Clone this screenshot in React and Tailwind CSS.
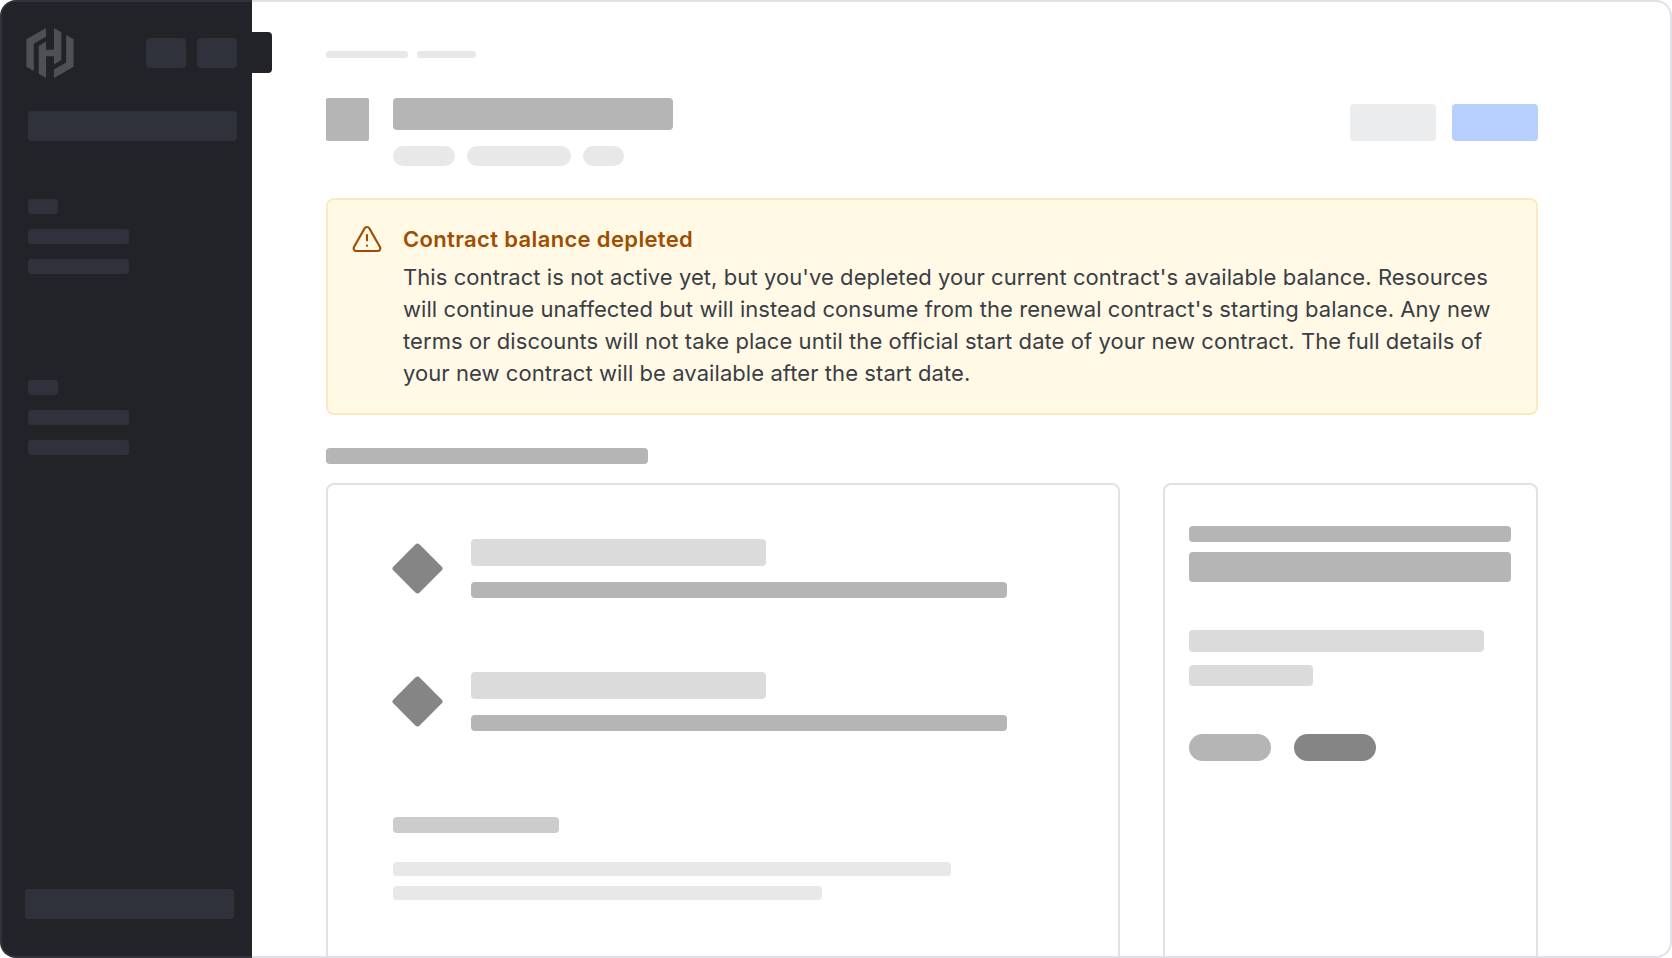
import React from "react";
import { SiHashicorp } from "react-icons/si";
import { TriangleAlert } from "lucide-react";

function Row() {
  return (
    <div className="flex items-center gap-[28px]">
      <div className="-ml-[2px] flex h-[52px] w-[52px] items-center justify-center">
        <div className="h-[37px] w-[37px] rotate-45 rounded-[3px] bg-[#858585]" />
      </div>
      <div className="flex flex-col gap-[16px]">
        <div className="h-[27px] w-[295px] rounded-[4px] bg-[#dbdbdb]" />
        <div className="h-[16px] w-[536px] rounded-[4px] bg-[#b5b5b5]" />
      </div>
    </div>
  );
}

function NavGroup() {
  return (
    <div className="flex flex-col gap-[15px]">
      <div className="h-[15px] w-[30px] rounded-[3px] bg-[#2f323a]" />
      <div className="h-[15px] w-[101px] rounded-[3px] bg-[#2f323a]" />
      <div className="h-[15px] w-[101px] rounded-[3px] bg-[#2f323a]" />
    </div>
  );
}

export default function App() {
  return (
    <div className="relative flex h-[958px] w-[1672px] rounded-[16px] border-2 border-[#e0e0e6] bg-white font-['Inter',sans-serif]">
      <div className="absolute left-[230px] top-[30px] z-0 h-[41px] w-[40px] rounded-[4px] bg-[#212328]" />
      <aside className="relative z-10 -my-[2px] -ml-[2px] flex w-[252px] shrink-0 flex-col rounded-l-[16px] border-2 border-r-0 border-[#2f323a] bg-[#212328] pl-[26px] pr-[15px]">
        <div className="flex items-center justify-between pt-[26px]">
          <SiHashicorp className="-ml-[3px] h-[50px] w-[50px] text-[#4f5055]" />
          <div className="flex gap-[11px]">
            <div className="h-[30px] w-[40px] rounded-[4px] bg-[#2f323a]" />
            <div className="h-[30px] w-[40px] rounded-[4px] bg-[#2f323a]" />
          </div>
        </div>
        <div className="mt-[33px] h-[30px] w-[209px] rounded-[4px] bg-[#2f323a]" />
        <div className="mt-[58px] flex flex-col gap-[106px]">
          <NavGroup />
          <NavGroup />
        </div>
        <div className="mb-[37px] -ml-[3px] mt-auto h-[30px] w-[209px] rounded-[4px] bg-[#2f323a]" />
      </aside>

      <main className="flex-1 overflow-hidden pl-[74px] pr-[132px]">
        <div className="mt-[49px] flex gap-[9px]">
          <div className="h-[7px] w-[82px] rounded-[3px] bg-[#e8e8e8]" />
          <div className="h-[7px] w-[59px] rounded-[3px] bg-[#e8e8e8]" />
        </div>

        <div className="mt-[40px] flex items-start justify-between">
          <div className="flex gap-[24px]">
            <div className="h-[43px] w-[43px] rounded-[2px] bg-[#b5b5b5]" />
            <div className="flex flex-col gap-[16px]">
              <div className="h-[32px] w-[280px] rounded-[4px] bg-[#b5b5b5]" />
              <div className="flex gap-[12px]">
                <div className="h-[20px] w-[62px] rounded-full bg-[#e8e8e8]" />
                <div className="h-[20px] w-[104px] rounded-full bg-[#e8e8e8]" />
                <div className="h-[20px] w-[41px] rounded-full bg-[#e8e8e8]" />
              </div>
            </div>
          </div>
          <div className="mt-[6px] flex gap-[16px]">
            <div className="h-[37px] w-[86px] rounded-[4px] bg-[#ebeced]" />
            <div className="h-[37px] w-[86px] rounded-[4px] bg-[#b7cffe]" />
          </div>
        </div>

        <div className="mt-[32px] flex h-[217px] gap-[20px] rounded-[8px] border-2 border-[#fbeabf] bg-[#fff9e6] pl-[23px] pr-[40px] pt-[23px]">
          <TriangleAlert className="h-[32px] w-[32px] shrink-0" color="#a24b00" strokeWidth={1.6} />
          <div>
            <div className="text-[22px] font-semibold leading-[32px] tracking-[0.35px] text-[#a04d00]">Contract balance depleted</div>
            <p className="mt-[6px] text-[22px] leading-[32px] tracking-[0.07px] text-[#3b3d45]">
              This contract is not active yet, but you've depleted your current contract's available balance. Resources will continue unaffected but will instead consume from the renewal contract's starting balance. Any new terms or discounts will not take place until the official start date of your new contract. The full details of your new contract will be available after the start date.
            </p>
          </div>
        </div>

        <div className="mt-[33px] h-[16px] w-[322px] rounded-[4px] bg-[#b5b5b5]" />

        <div className="mt-[19px] flex gap-[43px]">
          <div className="h-[600px] w-[794px] shrink-0 rounded-[8px] border-2 border-[#e0e0e6] pl-[65px] pt-[54px]">
            <div className="flex flex-col gap-[74px]">
              <Row />
              <Row />
            </div>
            <div className="mt-[86px] h-[16px] w-[166px] rounded-[4px] bg-[#cccccc]" />
            <div className="mt-[29px] h-[14px] w-[558px] rounded-[4px] bg-[#e8e8e8]" />
            <div className="mt-[10px] h-[14px] w-[429px] rounded-[4px] bg-[#e8e8e8]" />
          </div>
          <div className="h-[600px] w-[375px] shrink-0 rounded-[8px] border-2 border-[#e0e0e6] pl-[24px] pr-[25px] pt-[41px]">
            <div className="h-[16px] rounded-[4px] bg-[#b5b5b5]" />
            <div className="mt-[10px] h-[30px] rounded-[4px] bg-[#b5b5b5]" />
            <div className="mt-[48px] h-[22px] w-[295px] rounded-[4px] bg-[#dbdbdb]" />
            <div className="mt-[13px] h-[21px] w-[124px] rounded-[4px] bg-[#dbdbdb]" />
            <div className="mt-[48px] flex gap-[23px]">
              <div className="h-[27px] w-[82px] rounded-full bg-[#b5b5b5]" />
              <div className="h-[27px] w-[82px] rounded-full bg-[#858585]" />
            </div>
          </div>
        </div>
      </main>
    </div>
  );
}
